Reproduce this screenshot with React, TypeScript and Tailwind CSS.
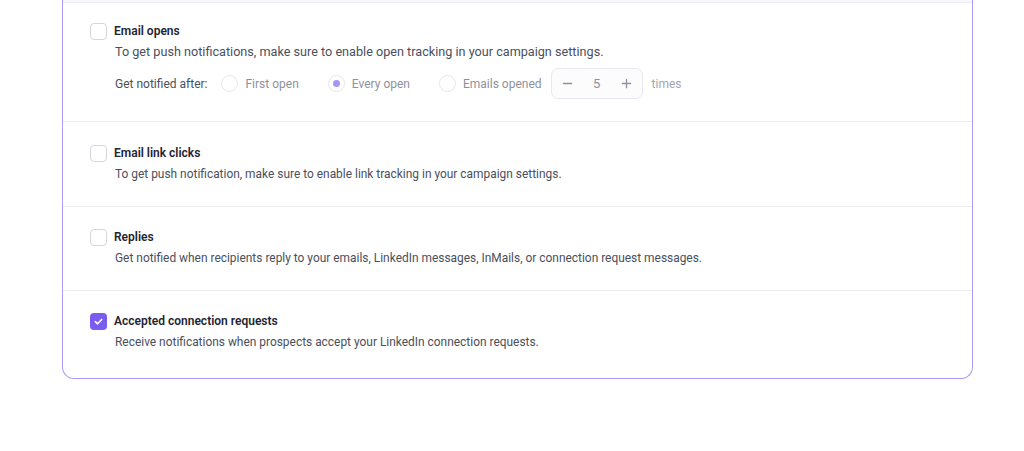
import React from "react";

function Checkbox({ checked }: { checked?: boolean }) {
  if (checked) {
    return (
      <div className="w-[17px] h-[17px] rounded-[4px] bg-[#7b5cf0] flex items-center justify-center shrink-0">
        <svg width="11" height="11" viewBox="0 0 12 12" fill="none">
          <path d="M2.5 6.2L5 8.5L9.5 3.8" stroke="white" strokeWidth="1.8" strokeLinecap="round" strokeLinejoin="round" />
        </svg>
      </div>
    );
  }
  return <div className="w-[17px] h-[17px] rounded-[4px] border border-[#d4d6dd] bg-white shrink-0" />;
}

function Radio({ checked, label }: { checked?: boolean; label: string }) {
  return (
    <div className="flex items-center gap-[7px]">
      <div className="w-[17px] h-[17px] rounded-full border border-[#e6e7ec] flex items-center justify-center bg-white">
        {checked && <div className="w-[7px] h-[7px] rounded-full bg-[#a795f6]" />}
      </div>
      <span className="text-[#8e919c]">{label}</span>
    </div>
  );
}

function Section({
  title,
  desc,
  checked,
  children,
  pad,
  descSize,
}: {
  title: string;
  desc: string;
  checked?: boolean;
  children?: React.ReactNode;
  pad: string;
  descSize: string;
}) {
  return (
    <div className={`pl-[27px] pr-6 ${pad}`}>
      <div className="flex items-center gap-[7px]">
        <Checkbox checked={checked} />
        <div className="text-[12px] leading-5 font-semibold text-[#1f2430]">{title}</div>
      </div>
      <div className={`pl-[25px] mt-[1px] leading-5 text-[#4a4f5c] ${descSize}`}>{desc}</div>
      {children}
    </div>
  );
}

export default function App() {
  return (
    <div className="w-[1024px] h-[451px] bg-white overflow-hidden" style={{ fontFamily: "Roboto, 'Noto Sans', sans-serif" }}>
      <div className="mx-[62px] -mt-[12px] border border-[#a99bf5] rounded-b-[12px] border-t-0 w-[911px] overflow-hidden">
        <div className="h-[15px] bg-[#f8f7fc] border-b border-[#eceaf4]" />
        <Section
          pad="pt-[18px] pb-[22px] border-b border-[#ecedf1]"
          descSize="text-[12.65px]"
          title="Email opens"
          desc="To get push notifications, make sure to enable open tracking in your campaign settings."
        >
          <div className="pl-[25px] mt-[6px] flex items-center text-[12px]">
            <span className="text-[#4a4f5c] mr-[14px]">Get notified after:</span>
            <div className="mr-[29px]">
              <Radio label="First open" />
            </div>
            <div className="mr-[29px]">
              <Radio checked label="Every open" />
            </div>
            <Radio label="Emails opened" />
            <div className="ml-[9px] w-[92px] h-[31px] rounded-[7px] border border-[#e8e9ee] bg-[#fcfcfd] flex items-center justify-between px-[10px] text-[#8e919c]">
              <svg width="11" height="11" viewBox="0 0 12 12">
                <path d="M1.5 6H10.5" stroke="#8e919c" strokeWidth="1.4" strokeLinecap="round" />
              </svg>
              <span className="text-[13px]">5</span>
              <svg width="11" height="11" viewBox="0 0 12 12">
                <path d="M1.5 6H10.5M6 1.5V10.5" stroke="#8e919c" strokeWidth="1.4" strokeLinecap="round" />
              </svg>
            </div>
            <span className="ml-[9px] text-[#a3a6b0]">times</span>
          </div>
        </Section>
        <Section
          pad="pt-[21px] pb-[22px] border-b border-[#ecedf1]"
          descSize="text-[11.93px]"
          title="Email link clicks"
          desc="To get push notification, make sure to enable link tracking in your campaign settings."
        />
        <Section
          pad="pt-[20px] pb-[22px] border-b border-[#ecedf1]"
          descSize="text-[11.93px]"
          title="Replies"
          desc="Get notified when recipients reply to your emails, LinkedIn messages, InMails, or connection request messages."
        />
        <Section
          pad="pt-[20px] pb-[26px]"
          descSize="text-[11.93px]"
          checked
          title="Accepted connection requests"
          desc="Receive notifications when prospects accept your LinkedIn connection requests."
        />
      </div>
    </div>
  );
}
